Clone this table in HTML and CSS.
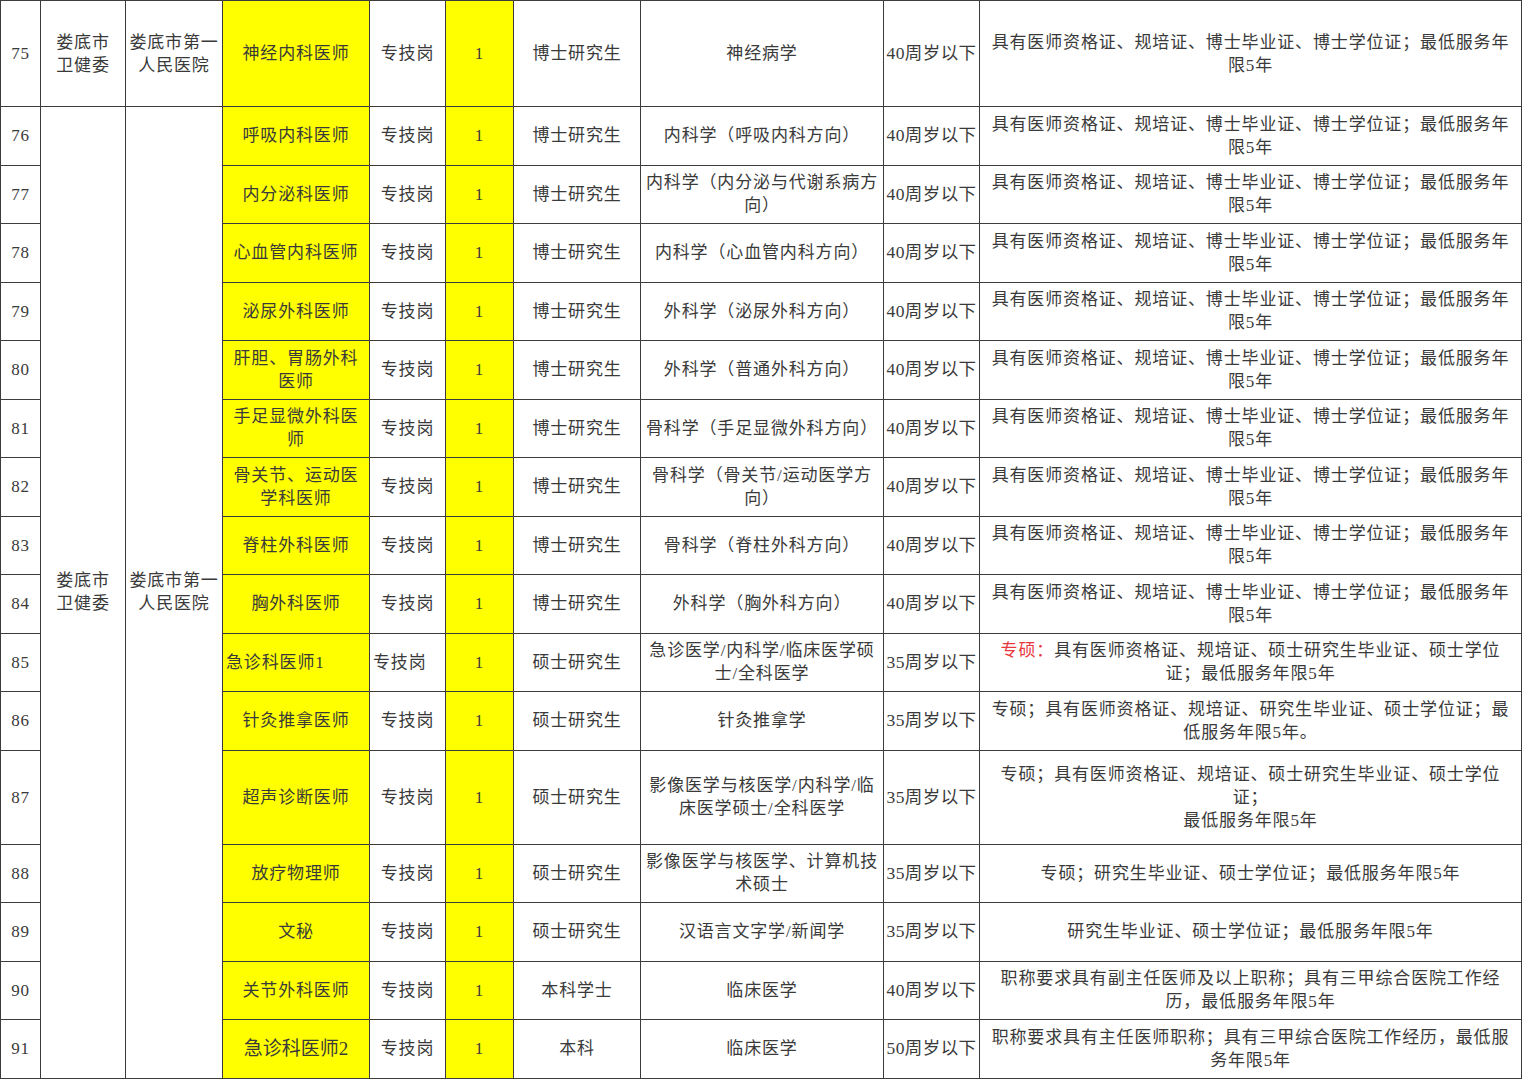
FILE: index.html
```html
<!DOCTYPE html>
<html lang="zh-CN">
<head>
<meta charset="utf-8">
<title>岗位表</title>
<link rel="stylesheet" href="styles.css">
</head>
<body>
<table class="grid">
  <colgroup>
    <col class="c-no"><col class="c-dept"><col class="c-unit"><col class="c-post"><col class="c-type"><col class="c-num"><col class="c-edu"><col class="c-major"><col class="c-age"><col class="c-req">
  </colgroup>
  <tbody>
    <tr class="r-tall">
      <td>75</td><td class="narrow">娄底市<br>卫健委</td><td class="tight">娄底市第一人民医院</td>
      <td class="hl post">神经内科医师</td><td>专技岗</td><td class="hl">1</td><td>博士研究生</td><td class="major">神经病学</td><td class="age">40周岁以下</td>
      <td class="req">具有医师资格证、规培证、博士毕业证、博士学位证；最低服务年限5年</td>
    </tr>
    <tr class="r">
      <td>76</td><td class="narrow" rowspan="16">娄底市<br>卫健委</td><td class="tight" rowspan="16">娄底市第一人民医院</td>
      <td class="hl post">呼吸内科医师</td><td>专技岗</td><td class="hl">1</td><td>博士研究生</td><td class="major">内科学（呼吸内科方向）</td><td class="age">40周岁以下</td>
      <td class="req">具有医师资格证、规培证、博士毕业证、博士学位证；最低服务年限5年</td>
    </tr>
    <tr class="r">
      <td>77</td><td class="hl post">内分泌科医师</td><td>专技岗</td><td class="hl">1</td><td>博士研究生</td><td class="major">内科学（内分泌与代谢系病方向）</td><td class="age">40周岁以下</td>
      <td class="req">具有医师资格证、规培证、博士毕业证、博士学位证；最低服务年限5年</td>
    </tr>
    <tr class="r">
      <td>78</td><td class="hl post">心血管内科医师</td><td>专技岗</td><td class="hl">1</td><td>博士研究生</td><td class="major">内科学（心血管内科方向）</td><td class="age">40周岁以下</td>
      <td class="req">具有医师资格证、规培证、博士毕业证、博士学位证；最低服务年限5年</td>
    </tr>
    <tr class="r">
      <td>79</td><td class="hl post">泌尿外科医师</td><td>专技岗</td><td class="hl">1</td><td>博士研究生</td><td class="major">外科学（泌尿外科方向）</td><td class="age">40周岁以下</td>
      <td class="req">具有医师资格证、规培证、博士毕业证、博士学位证；最低服务年限5年</td>
    </tr>
    <tr class="r">
      <td>80</td><td class="hl post">肝胆、胃肠外科医师</td><td>专技岗</td><td class="hl">1</td><td>博士研究生</td><td class="major">外科学（普通外科方向）</td><td class="age">40周岁以下</td>
      <td class="req">具有医师资格证、规培证、博士毕业证、博士学位证；最低服务年限5年</td>
    </tr>
    <tr class="r">
      <td>81</td><td class="hl post">手足显微外科医师</td><td>专技岗</td><td class="hl">1</td><td>博士研究生</td><td class="major">骨科学（手足显微外科方向）</td><td class="age">40周岁以下</td>
      <td class="req">具有医师资格证、规培证、博士毕业证、博士学位证；最低服务年限5年</td>
    </tr>
    <tr class="r">
      <td>82</td><td class="hl post">骨关节、运动医学科医师</td><td>专技岗</td><td class="hl">1</td><td>博士研究生</td><td class="major">骨科学（骨关节/运动医学方向）</td><td class="age">40周岁以下</td>
      <td class="req">具有医师资格证、规培证、博士毕业证、博士学位证；最低服务年限5年</td>
    </tr>
    <tr class="r">
      <td>83</td><td class="hl post">脊柱外科医师</td><td>专技岗</td><td class="hl">1</td><td>博士研究生</td><td class="major">骨科学（脊柱外科方向）</td><td class="age">40周岁以下</td>
      <td class="req">具有医师资格证、规培证、博士毕业证、博士学位证；最低服务年限5年</td>
    </tr>
    <tr class="r">
      <td>84</td><td class="hl post">胸外科医师</td><td>专技岗</td><td class="hl">1</td><td>博士研究生</td><td class="major">外科学（胸外科方向）</td><td class="age">40周岁以下</td>
      <td class="req">具有医师资格证、规培证、博士毕业证、博士学位证；最低服务年限5年</td>
    </tr>
    <tr class="r">
      <td>85</td><td class="hl post left">急诊科医师1</td><td class="left">专技岗</td><td class="hl">1</td><td>硕士研究生</td><td class="major">急诊医学/内科学/临床医学硕士/全科医学</td><td class="age">35周岁以下</td>
      <td class="req"><span class="red">专硕：</span>具有医师资格证、规培证、硕士研究生毕业证、硕士学位证；最低服务年限5年</td>
    </tr>
    <tr class="r">
      <td>86</td><td class="hl post">针灸推拿医师</td><td>专技岗</td><td class="hl">1</td><td>硕士研究生</td><td class="major">针灸推拿学</td><td class="age">35周岁以下</td>
      <td class="req">专硕；具有医师资格证、规培证、研究生毕业证、硕士学位证；最低服务年限5年。</td>
    </tr>
    <tr class="r-mid">
      <td>87</td><td class="hl post">超声诊断医师</td><td>专技岗</td><td class="hl">1</td><td>硕士研究生</td><td class="major">影像医学与核医学/内科学/临床医学硕士/全科医学</td><td class="age">35周岁以下</td>
      <td class="req">专硕；具有医师资格证、规培证、硕士研究生毕业证、硕士学位证；<br>最低服务年限5年</td>
    </tr>
    <tr class="r">
      <td>88</td><td class="hl post">放疗物理师</td><td>专技岗</td><td class="hl">1</td><td>硕士研究生</td><td class="major">影像医学与核医学、计算机技术硕士</td><td class="age">35周岁以下</td>
      <td class="req">专硕；研究生毕业证、硕士学位证；最低服务年限5年</td>
    </tr>
    <tr class="r">
      <td>89</td><td class="hl post">文秘</td><td>专技岗</td><td class="hl">1</td><td>硕士研究生</td><td class="major">汉语言文字学/新闻学</td><td class="age">35周岁以下</td>
      <td class="req">研究生毕业证、硕士学位证；最低服务年限5年</td>
    </tr>
    <tr class="r">
      <td>90</td><td class="hl post">关节外科医师</td><td>专技岗</td><td class="hl">1</td><td>本科学士</td><td class="major">临床医学</td><td class="age">40周岁以下</td>
      <td class="req">职称要求具有副主任医师及以上职称；具有三甲综合医院工作经历，最低服务年限5年</td>
    </tr>
    <tr class="r">
      <td>91</td><td class="hl post big">急诊科医师2</td><td>专技岗</td><td class="hl">1</td><td>本科</td><td class="major">临床医学</td><td class="age">50周岁以下</td>
      <td class="req">职称要求具有主任医师职称；具有三甲综合医院工作经历，最低服务年限5年</td>
    </tr>
  </tbody>
</table>
</body>
</html>
```

FILE: styles.css
```css
html, body {
  margin: 0;
  padding: 0;
  background: #ffffff;
}

.grid {
  border-collapse: collapse;
  table-layout: fixed;
  width: 1521px;
  font-family: "Liberation Serif", "Noto Sans CJK SC", serif;
  font-size: 17px;
  letter-spacing: 0.85px;
  line-height: 23px;
  color: #3a3a3a;
}

.c-no { width: 40px; }
.c-dept { width: 85px; }
.c-unit { width: 97px; }
.c-post { width: 147px; }
.c-type { width: 76px; }
.c-num { width: 68px; }
.c-edu { width: 127px; }
.c-major { width: 243px; }
.c-age { width: 96px; }
.c-req { width: 542px; }

.grid td {
  border: 1px solid #3c3c3c;
  padding: 0 4px;
  text-align: center;
  vertical-align: middle;
  overflow: hidden;
}

.r-tall { height: 106px; }
.r { height: 58.5px; }
.r-mid { height: 94px; }

.grid td.hl {
  background: #ffff00;
}

.grid td.post {
  padding: 0 6px;
}

.grid td.tight {
  padding: 0 3px;
}

.grid td.narrow {
  padding: 0 2px;
}

.grid td.major {
  padding: 0 2px;
}

.grid td.age {
  padding: 0 2px;
  letter-spacing: 0.4px;
  font-size: 17.5px;
}

.grid td.req {
  padding: 0 10px;
}

.grid td.left {
  text-align: left;
  padding-left: 3px;
}

.grid td.big {
  font-size: 19px;
  letter-spacing: 0;
}

.red {
  color: #e8383d;
}
```
